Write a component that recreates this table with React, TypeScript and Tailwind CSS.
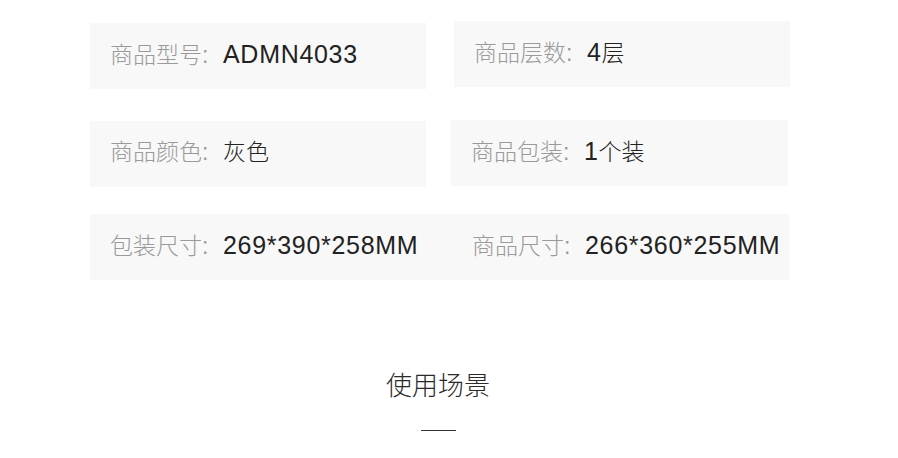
import React from "react";

interface SpecItem {
  label: string;
  value: string;
}

// split a value into latin and CJK runs so latin digits can be a touch larger
const splitRuns = (text: string) => text.match(/[\x00-\x7f]+|[^\x00-\x7f]+/g) || [];

const SpecText: React.FC<SpecItem> = ({ label, value }) => (
  <div className="flex items-baseline whitespace-nowrap leading-none font-light">
    <span className="w-[113px] shrink-0 text-[23px] text-[#9a9a9a]">{label}</span>
    <span className="text-[23px] text-[#222]">
      {splitRuns(value).map((run, i) =>
        /^[\x00-\x7f]+$/.test(run) ? (
          <span key={i} className="text-[25px] tracking-[0.7px]">
            {run}
          </span>
        ) : (
          <span key={i}>{run}</span>
        )
      )}
    </span>
  </div>
);

const SpecBox: React.FC<SpecItem & { className?: string }> = ({ label, value, className = "" }) => (
  <div className={`h-[66px] bg-[#f8f8f8] flex items-center pl-[20px] pb-[3px] ${className}`}>
    <SpecText label={label} value={value} />
  </div>
);

export default function App() {
  return (
    <div
      className="w-[898px] h-[458px] bg-white overflow-hidden"
      style={{ fontFamily: '"Liberation Sans", "Noto Sans CJK SC", sans-serif' }}
    >
      <div className="w-[876px] pt-[21px]">
        {/* Row 1 */}
        <div className="flex items-start pl-[90px]">
          <SpecBox label="商品型号:" value="ADMN4033" className="w-[336px] mt-[2px]" />
          <SpecBox label="商品层数:" value="4层" className="w-[336px] ml-[28px]" />
        </div>

        {/* Row 2 */}
        <div className="flex items-start pl-[90px] mt-[31px]">
          <SpecBox label="商品颜色:" value="灰色" className="w-[336px] mt-[1px]" />
          <SpecBox label="商品包装:" value="1个装" className="w-[337px] ml-[25px]" />
        </div>

        {/* Row 3 */}
        <div className="ml-[90px] mt-[27px] w-[699px] h-[66px] bg-[#f8f8f8] flex items-center pb-[3px]">
          <div className="w-[362px] pl-[20px]">
            <SpecText label="包装尺寸:" value="269*390*258MM" />
          </div>
          <div className="pl-[20px]">
            <SpecText label="商品尺寸:" value="266*360*255MM" />
          </div>
        </div>

        {/* Section title */}
        <div className="mt-[93px] flex flex-col items-center">
          <h2 className="text-[26px] leading-none text-[#2a2a2a] font-light">使用场景</h2>
          <div className="mt-[31px] w-[35px] h-px bg-[#333]" />
        </div>
      </div>
    </div>
  );
}
